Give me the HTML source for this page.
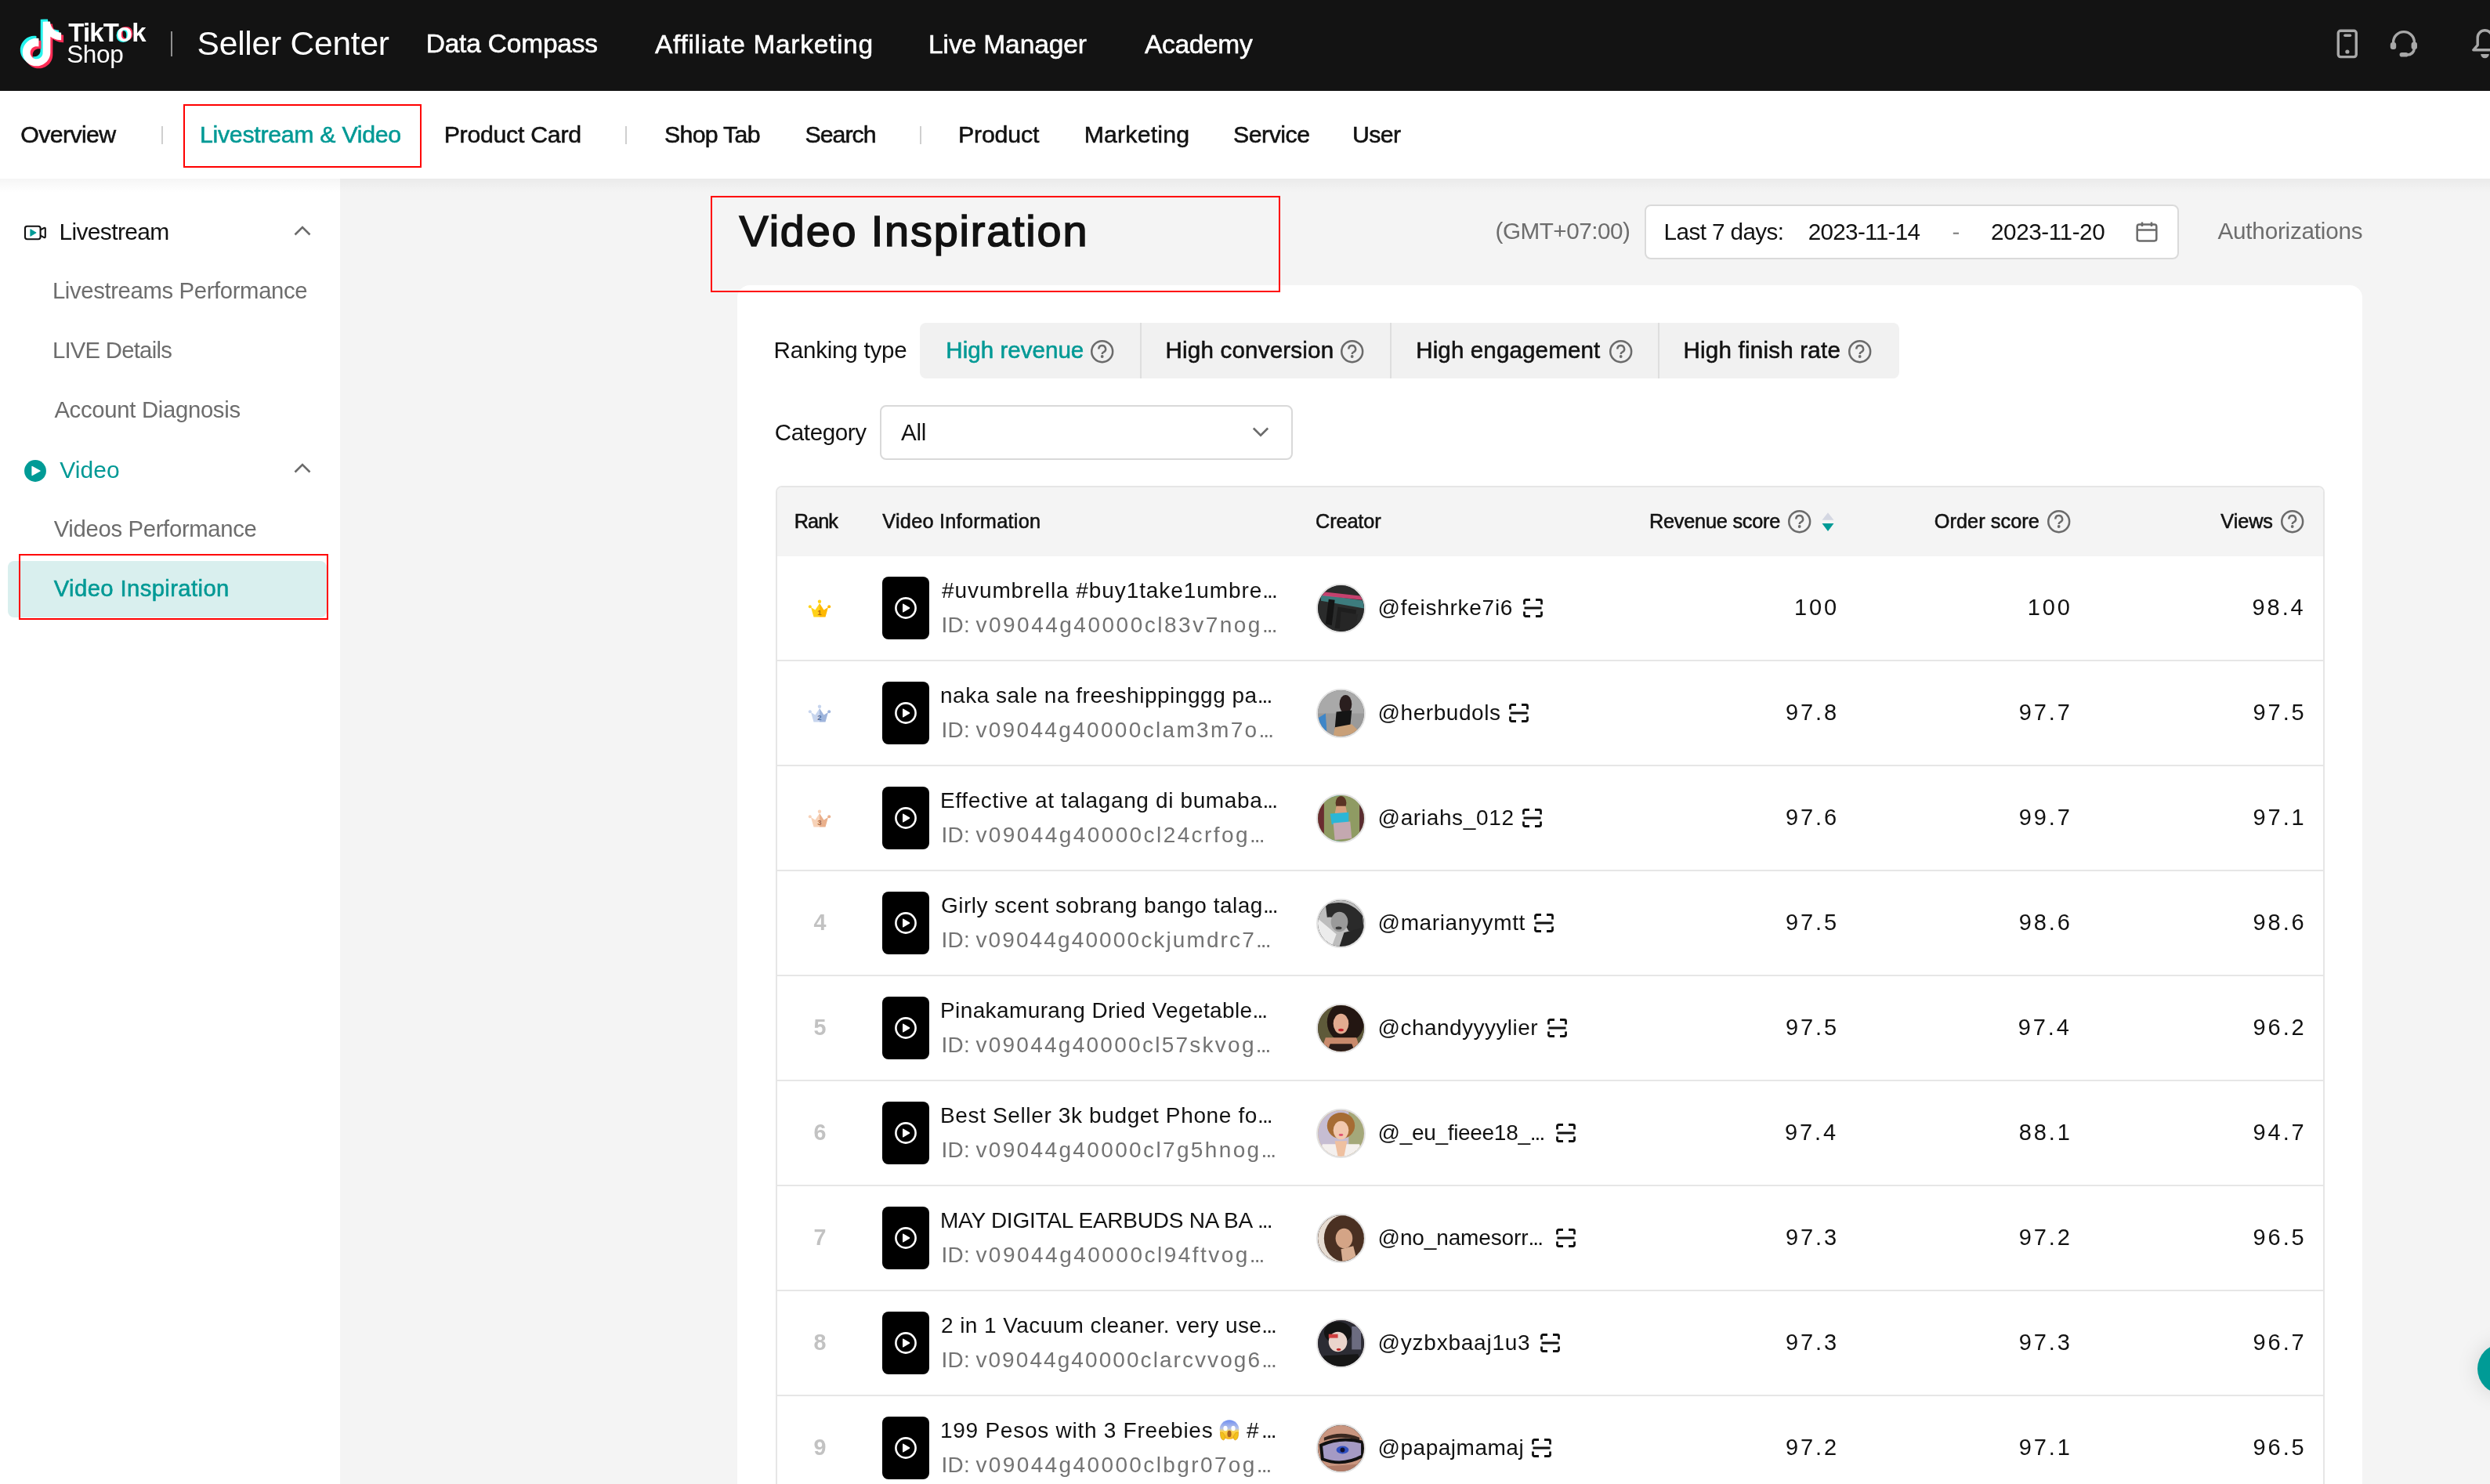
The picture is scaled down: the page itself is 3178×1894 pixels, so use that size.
<!DOCTYPE html>
<html><head><meta charset="utf-8"><title>Video Inspiration</title>
<style>
html,body{margin:0;padding:0}
body{width:3178px;height:1894px;overflow:hidden;position:relative;background:#f4f4f4;font-family:"Liberation Sans",sans-serif}
.ab{position:absolute;display:block}
.t{position:absolute;white-space:pre;font-family:"Liberation Sans",sans-serif}
#tx{position:absolute;left:0;top:0;width:3178px;height:1894px;will-change:transform}
.thumb{position:absolute;left:1126px;width:60px;height:80px;background:#000;border-radius:8px}
.thumb svg{display:block}
.av{position:absolute;left:1679.5px;width:63px;height:63px;border-radius:50%;box-sizing:border-box;border:2px solid #e2e2e2;overflow:hidden}
.av svg{margin:0}
.rbox{position:absolute;box-sizing:border-box;border:2px solid #ff0000}
.sep{position:absolute;width:2px;background:#cfcfcf}
</style></head><body>
<!-- ===== top bar ===== -->
<div class="ab" style="left:0;top:0;width:3178px;height:116px;background:#131313"></div>
<svg class="ab" style="left:0;top:0" width="100" height="100" viewBox="0 0 100 100">
 <defs><path id="tk" d="M12.525.02c1.31-.02 2.61-.01 3.91-.02.08 1.53.63 3.09 1.75 4.17 1.12 1.11 2.7 1.62 4.24 1.79v4.03c-1.44-.05-2.89-.35-4.2-.97-.57-.26-1.1-.59-1.62-.93-.01 2.92.01 5.84-.02 8.75-.08 1.4-.54 2.790-1.35 3.94-1.31 1.92-3.58 3.17-5.91 3.21-1.43.08-2.86-.31-4.08-1.03-2.02-1.19-3.44-3.37-3.65-5.71-.02-.5-.03-1-.01-1.49.18-1.9 1.12-3.72 2.58-4.96 1.66-1.44 3.98-2.13 6.15-1.72.02 1.48-.04 2.96-.04 4.44-.99-.32-2.15-.23-3.02.37-.63.41-1.11 1.04-1.36 1.75-.21.51-.15 1.07-.14 1.61.24 1.64 1.82 3.02 3.5 2.87 1.12-.01 2.19-.66 2.77-1.61.19-.33.4-.67.41-1.06.1-1.790.06-3.57.07-5.36.01-4.03-.01-8.05.02-12.07z"/></defs>
 <use href="#tk" fill="#25f4ee" transform="translate(22.1 24.6) scale(2.365)"/>
 <use href="#tk" fill="#fe2c55" transform="translate(28.1 30.6) scale(2.365)"/>
 <use href="#tk" fill="#ffffff" transform="translate(25.1 27.6) scale(2.365)"/>
</svg>
<div class="ab" style="left:218px;top:40px;width:2px;height:32px;background:#8f8f8f"></div>
<!-- right icons -->
<svg class="ab" style="left:2975px;top:30px" width="203" height="52" viewBox="2975 30 203 52">
 <g fill="none" stroke="#a8a8a8" stroke-width="3.4">
  <rect x="2984.3" y="39.2" width="23" height="33.4" rx="3"/>
  <path d="M3054.6 57 V54 A13.4 13.4 0 0 1 3081.4 54 V57" />
  <path d="M3081.5 61.5 C3081 66 3079 70 3072 70" stroke-linecap="round"/>
  <path d="M3156.8 63.8 L3162.2 57.6 V48 A9.3 9.3 0 0 1 3180.8 48 V57.6 L3186.2 63.8 Z" stroke-linejoin="round"/>
 </g>
 <g fill="#a8a8a8">
  <rect x="2991.2" y="43.5" width="10" height="3.4" rx="1.7"/>
  <circle cx="2995.9" cy="66" r="2.6"/>
  <rect x="3050.8" y="54" width="7.4" height="9" rx="3"/>
  <rect x="3077.6" y="53.8" width="7.4" height="9.2" rx="3"/>
  <rect x="3062.6" y="67" width="11" height="5.6" rx="2.8"/>
  <path d="M3166.2 69 H3176.8 A5.3 5.3 0 0 1 3166.2 69Z"/>
 </g>
</svg>
<!-- ===== subnav ===== -->
<div class="ab" style="left:0;top:116px;width:3178px;height:112px;background:#fff"></div>
<div class="sep" style="left:206px;top:161px;height:23px"></div>
<div class="sep" style="left:798px;top:161px;height:23px"></div>
<div class="sep" style="left:1174px;top:161px;height:23px"></div>
<div class="rbox" style="left:234px;top:133px;width:304px;height:81px"></div>
<!-- ===== sidebar ===== -->
<div class="ab" style="left:0;top:228px;width:434px;height:1666px;background:#fff"></div>
<div class="ab" style="left:0;top:228px;width:3178px;height:18px;background:linear-gradient(rgba(0,0,0,0.038),rgba(0,0,0,0))"></div>
<svg class="ab" style="left:25px;top:280px" width="40" height="32" viewBox="0 0 40 32">
 <rect x="7" y="8.7" width="19.6" height="16.5" rx="2.6" fill="none" stroke="#121212" stroke-width="2.1"/>
 <path d="M26.6 13.4 L31.3 10.9 Q32.8 10.2 32.8 11.9 V22.1 Q32.8 23.8 31.3 23.1 L26.6 20.6" fill="none" stroke="#121212" stroke-width="2.1" stroke-linejoin="round"/>
 <path d="M13.8 12.6 L21.2 17 L13.8 21.4Z" fill="#009b96" stroke="#009b96" stroke-width="0.8" stroke-linejoin="round"/>
</svg>
<svg class="ab" style="left:370px;top:283px" width="32" height="24" viewBox="0 0 32 24">
 <path d="M6.5 16.5 L16 7 L25.5 16.5" fill="none" stroke="#6b6b6b" stroke-width="2.6"/>
</svg>
<svg class="ab" style="left:25px;top:582px" width="40" height="40" viewBox="0 0 40 40">
 <circle cx="20" cy="19" r="13.95" fill="#009b96"/>
 <path d="M16.4 12.9 Q15.4 12.3 15.4 13.5 V24.5 Q15.4 25.7 16.4 25.1 L26.4 19.5 Q27.2 19 26.4 18.5Z" fill="#fff"/>
</svg>
<svg class="ab" style="left:370px;top:586px" width="32" height="24" viewBox="0 0 32 24">
 <path d="M6.5 16.5 L16 7 L25.5 16.5" fill="none" stroke="#6b6b6b" stroke-width="2.6"/>
</svg>
<div class="ab" style="left:10px;top:716px;width:407px;height:72px;border-radius:8px;background:#d9efee"></div>
<div class="rbox" style="left:24px;top:707px;width:395px;height:84px"></div>
<!-- ===== header area ===== -->
<div class="ab" style="left:2098.5px;top:260.5px;width:682.5px;height:70.5px;box-sizing:border-box;border:2px solid #dadada;border-radius:8px;background:#fff"></div>
<svg class="ab" style="left:2722px;top:280px" width="36" height="32" viewBox="0 0 36 32">
 <rect x="5.7" y="6.6" width="24.6" height="20.8" rx="2.6" fill="none" stroke="#6b6b6b" stroke-width="2.5"/>
 <path d="M5.7 13.6 H30.3 M12 3.4 V9 M24 3.4 V9" fill="none" stroke="#6b6b6b" stroke-width="2.5"/>
</svg>
<!-- ===== card ===== -->
<div class="ab" style="left:941px;top:364px;width:2074px;height:1600px;border-radius:16px;background:#fff"></div>
<div class="ab" style="left:1174px;top:412.2px;width:1249.5px;height:71.2px;border-radius:8px;background:#f1f1f1"></div>
<div class="ab" style="left:1454.6px;top:412.2px;width:2px;height:71.2px;background:#dedede"></div>
<div class="ab" style="left:1774px;top:412.2px;width:2px;height:71.2px;background:#dedede"></div>
<div class="ab" style="left:2116px;top:412.2px;width:2px;height:71.2px;background:#dedede"></div>
<svg class="ab" style="left:1392.4px;top:433.5px" width="30" height="30" viewBox="0 0 30 30"><circle cx="14.7" cy="14.7" r="13.45" fill="none" stroke="#6b6b6b" stroke-width="2.5"/><path d="M10.3 11.4 A4.4 4.4 0 1 1 16.6 15.4 C15.3 16 14.7 16.6 14.7 17.9" fill="none" stroke="#6b6b6b" stroke-width="2.5"/><circle cx="14.7" cy="21" r="1.9" fill="#6b6b6b"/></svg>
<svg class="ab" style="left:1711.4px;top:433.5px" width="30" height="30" viewBox="0 0 30 30"><circle cx="14.7" cy="14.7" r="13.45" fill="none" stroke="#6b6b6b" stroke-width="2.5"/><path d="M10.3 11.4 A4.4 4.4 0 1 1 16.6 15.4 C15.3 16 14.7 16.6 14.7 17.9" fill="none" stroke="#6b6b6b" stroke-width="2.5"/><circle cx="14.7" cy="21" r="1.9" fill="#6b6b6b"/></svg>
<svg class="ab" style="left:2053.6px;top:433.5px" width="30" height="30" viewBox="0 0 30 30"><circle cx="14.7" cy="14.7" r="13.45" fill="none" stroke="#6b6b6b" stroke-width="2.5"/><path d="M10.3 11.4 A4.4 4.4 0 1 1 16.6 15.4 C15.3 16 14.7 16.6 14.7 17.9" fill="none" stroke="#6b6b6b" stroke-width="2.5"/><circle cx="14.7" cy="21" r="1.9" fill="#6b6b6b"/></svg>
<svg class="ab" style="left:2359.4px;top:433.5px" width="30" height="30" viewBox="0 0 30 30"><circle cx="14.7" cy="14.7" r="13.45" fill="none" stroke="#6b6b6b" stroke-width="2.5"/><path d="M10.3 11.4 A4.4 4.4 0 1 1 16.6 15.4 C15.3 16 14.7 16.6 14.7 17.9" fill="none" stroke="#6b6b6b" stroke-width="2.5"/><circle cx="14.7" cy="21" r="1.9" fill="#6b6b6b"/></svg>
<div class="ab" style="left:1123.4px;top:516.8px;width:527px;height:70px;box-sizing:border-box;border:2px solid #d9d9d9;border-radius:8px;background:#fff"></div>
<svg class="ab" style="left:1594px;top:540px" width="30" height="24" viewBox="0 0 30 24">
 <path d="M5.8 6.5 L15 15.7 L24.2 6.5" fill="none" stroke="#6b6b6b" stroke-width="2.6"/>
</svg>
<!-- ===== table ===== -->
<div class="ab" style="left:989.5px;top:620.2px;width:1977px;height:1400px;box-sizing:border-box;border:2px solid #e6e6e6;border-radius:8px;background:#fff"></div>
<div class="ab" style="left:991.5px;top:622.2px;width:1973px;height:87.5px;border-radius:6px 6px 0 0;background:#f4f4f4"></div>
<svg class="ab" style="left:2322px;top:650px" width="24" height="32" viewBox="0 0 24 32">
 <path d="M3.5 13.8 L11 4.2 L18.5 13.8Z" fill="#d4d7e2"/>
 <path d="M3.5 18 L11 27.9 L18.5 18Z" fill="#009b96"/>
</svg>
<div class="ab" style="left:991px;top:842.0px;width:1975px;height:2px;background:#e6e6e6"></div>
<svg class="ab" style="left:1031px;top:764.5px" width="30" height="24" viewBox="0 0 30 24"><path d="M4 10 L9.5 13.5 L15 5 L15 22.5 L7.5 22.5 Z" fill="#ffd21a"/><path d="M26 10 L20.5 13.5 L15 5 L15 22.5 L22.5 22.5 Z" fill="#ffb800"/><circle cx="15" cy="2.8" r="2.2" fill="#ffd21a"/><circle cx="2.8" cy="9.3" r="2" fill="#ffd21a"/><circle cx="27.2" cy="9.3" r="2" fill="#ffb800"/><text x="15" y="19.8" text-anchor="middle" style="font-family:'Liberation Sans',sans-serif;font-weight:700;font-size:9.5px" fill="#b36b12">1</text></svg>
<div class="thumb" style="top:736.0px"><svg width="60" height="80" viewBox="0 0 60 80"><circle cx="30" cy="40" r="12.6" fill="none" stroke="#fff" stroke-width="2.6"/><path d="M26.8 34.6 L34.9 39.2 Q36 40 34.9 40.8 L26.8 45.4 Q26 45.8 26 44.9 L26 35.1 Q26 34.2 26.8 34.6Z" fill="#fff"/></svg></div>
<div class="av" style="top:744.5px;background:radial-gradient(circle at 60% 70%, #3a3a3a 0%, #262626 55%, #1b1b1b 100%)"><svg width="59" height="59" viewBox="0 0 60 60" style="display:block;border-radius:50%"><rect width="60" height="60" fill="#2a2b2b"/><path d="M4 12 L60 20 L60 30 L4 20Z" fill="#3d7c7e"/><path d="M2 8 L58 14 L58 19 L2 13Z" fill="#e0457a" opacity="0.85"/><path d="M14 18 L22 19 L18 52 L10 50Z" fill="#141414"/><path d="M26 28 L50 32 L46 58 L22 56Z" fill="#1e1e1e"/><path d="M30 34 L52 38 L48 60 L28 60Z" fill="#262626"/></svg></div>
<svg class="ab" style="left:1943.8px;top:764.3px" width="25" height="24" viewBox="0 0 25 24"><path d="M1.5 7.5V3.3a1.8 1.8 0 0 1 1.8-1.8H9M16 1.5h5.7a1.8 1.8 0 0 1 1.8 1.8v4.2M23.5 16.5v4.2a1.8 1.8 0 0 1-1.8 1.8H16M9 22.5H3.3a1.8 1.8 0 0 1-1.8-1.8v-4.2M1.5 12h22" fill="none" stroke="#121212" stroke-width="2.8"/></svg>
<div class="ab" style="left:991px;top:976.0px;width:1975px;height:2px;background:#e6e6e6"></div>
<svg class="ab" style="left:1031px;top:898.5px" width="30" height="24" viewBox="0 0 30 24"><path d="M4 10 L9.5 13.5 L15 5 L15 22.5 L7.5 22.5 Z" fill="#c7d5ee"/><path d="M26 10 L20.5 13.5 L15 5 L15 22.5 L22.5 22.5 Z" fill="#9fb5dc"/><circle cx="15" cy="2.8" r="2.2" fill="#c7d5ee"/><circle cx="2.8" cy="9.3" r="2" fill="#c7d5ee"/><circle cx="27.2" cy="9.3" r="2" fill="#9fb5dc"/><text x="15" y="19.8" text-anchor="middle" style="font-family:'Liberation Sans',sans-serif;font-weight:700;font-size:9.5px" fill="#55709e">2</text></svg>
<div class="thumb" style="top:870.0px"><svg width="60" height="80" viewBox="0 0 60 80"><circle cx="30" cy="40" r="12.6" fill="none" stroke="#fff" stroke-width="2.6"/><path d="M26.8 34.6 L34.9 39.2 Q36 40 34.9 40.8 L26.8 45.4 Q26 45.8 26 44.9 L26 35.1 Q26 34.2 26.8 34.6Z" fill="#fff"/></svg></div>
<div class="av" style="top:878.5px;background:radial-gradient(circle at 55% 45%, #2a2a2a 0%, #4a4a4a 35%, #8c8c8c 70%, #b0b0b0 100%)"><svg width="59" height="59" viewBox="0 0 60 60" style="display:block;border-radius:50%"><rect width="60" height="60" fill="#9a9a9a"/><rect x="0" y="0" width="60" height="30" fill="#b4b4b4" opacity="0.6"/><path d="M0 36 L10 30 L12 60 L0 60Z" fill="#3e86c8"/><ellipse cx="36" cy="18" rx="8" ry="12" fill="#2a1e1e"/><path d="M24 28 L44 26 L42 46 L22 50Z" fill="#151515"/><path d="M22 48 L44 44 L54 54 L30 60 L20 60Z" fill="#c9a078"/></svg></div>
<svg class="ab" style="left:1926.0px;top:898.3px" width="25" height="24" viewBox="0 0 25 24"><path d="M1.5 7.5V3.3a1.8 1.8 0 0 1 1.8-1.8H9M16 1.5h5.7a1.8 1.8 0 0 1 1.8 1.8v4.2M23.5 16.5v4.2a1.8 1.8 0 0 1-1.8 1.8H16M9 22.5H3.3a1.8 1.8 0 0 1-1.8-1.8v-4.2M1.5 12h22" fill="none" stroke="#121212" stroke-width="2.8"/></svg>
<div class="ab" style="left:991px;top:1110.0px;width:1975px;height:2px;background:#e6e6e6"></div>
<svg class="ab" style="left:1031px;top:1032.5px" width="30" height="24" viewBox="0 0 30 24"><path d="M4 10 L9.5 13.5 L15 5 L15 22.5 L7.5 22.5 Z" fill="#f7d2b8"/><path d="M26 10 L20.5 13.5 L15 5 L15 22.5 L22.5 22.5 Z" fill="#eab08c"/><circle cx="15" cy="2.8" r="2.2" fill="#f7d2b8"/><circle cx="2.8" cy="9.3" r="2" fill="#f7d2b8"/><circle cx="27.2" cy="9.3" r="2" fill="#eab08c"/><text x="15" y="19.8" text-anchor="middle" style="font-family:'Liberation Sans',sans-serif;font-weight:700;font-size:9.5px" fill="#a86a48">3</text></svg>
<div class="thumb" style="top:1004.0px"><svg width="60" height="80" viewBox="0 0 60 80"><circle cx="30" cy="40" r="12.6" fill="none" stroke="#fff" stroke-width="2.6"/><path d="M26.8 34.6 L34.9 39.2 Q36 40 34.9 40.8 L26.8 45.4 Q26 45.8 26 44.9 L26 35.1 Q26 34.2 26.8 34.6Z" fill="#fff"/></svg></div>
<div class="av" style="top:1012.5px;background:linear-gradient(90deg, #5a2a2a 0%, #8d9a63 18%, #27b5d0 45%, #c39a7a 60%, #8a9a63 85%, #5a2a2a 100%)"><svg width="59" height="59" viewBox="0 0 60 60" style="display:block;border-radius:50%"><rect width="60" height="60" fill="#8f9b63"/><rect x="0" y="0" width="8" height="60" fill="#6a2c30"/><rect x="54" y="0" width="6" height="60" fill="#5a2c30"/><ellipse cx="30" cy="10" rx="7" ry="9" fill="#5a3424"/><path d="M24 14 L36 14 L38 24 L22 24Z" fill="#d6a07e"/><path d="M16 24 L40 22 L40 36 L18 38Z" fill="#2bb6d6"/><path d="M20 36 L42 34 L44 56 L22 58Z" fill="#c4a8b0"/></svg></div>
<svg class="ab" style="left:1942.6px;top:1032.3px" width="25" height="24" viewBox="0 0 25 24"><path d="M1.5 7.5V3.3a1.8 1.8 0 0 1 1.8-1.8H9M16 1.5h5.7a1.8 1.8 0 0 1 1.8 1.8v4.2M23.5 16.5v4.2a1.8 1.8 0 0 1-1.8 1.8H16M9 22.5H3.3a1.8 1.8 0 0 1-1.8-1.8v-4.2M1.5 12h22" fill="none" stroke="#121212" stroke-width="2.8"/></svg>
<div class="ab" style="left:991px;top:1244.0px;width:1975px;height:2px;background:#e6e6e6"></div>
<div class="thumb" style="top:1138.0px"><svg width="60" height="80" viewBox="0 0 60 80"><circle cx="30" cy="40" r="12.6" fill="none" stroke="#fff" stroke-width="2.6"/><path d="M26.8 34.6 L34.9 39.2 Q36 40 34.9 40.8 L26.8 45.4 Q26 45.8 26 44.9 L26 35.1 Q26 34.2 26.8 34.6Z" fill="#fff"/></svg></div>
<div class="av" style="top:1146.5px;background:radial-gradient(circle at 45% 45%, #9a9a9a 0%, #555 45%, #2a2a2a 80%, #d8d8d8 100%)"><svg width="59" height="59" viewBox="0 0 60 60" style="display:block;border-radius:50%"><rect width="60" height="60" fill="#bdbdbd"/><path d="M0 24 L24 44 L18 60 L0 60Z" fill="#ececec"/><path d="M10 6 Q40 -4 58 20 L60 44 L40 40 Q30 20 12 22Z" fill="#2a2a2a"/><ellipse cx="28" cy="28" rx="11" ry="13" fill="#9a9a9a"/><ellipse cx="27" cy="36" rx="4" ry="2" fill="#3a3a3a"/><path d="M34 42 L56 36 L60 60 L28 60Z" fill="#262626"/></svg></div>
<svg class="ab" style="left:1957.7px;top:1166.3px" width="25" height="24" viewBox="0 0 25 24"><path d="M1.5 7.5V3.3a1.8 1.8 0 0 1 1.8-1.8H9M16 1.5h5.7a1.8 1.8 0 0 1 1.8 1.8v4.2M23.5 16.5v4.2a1.8 1.8 0 0 1-1.8 1.8H16M9 22.5H3.3a1.8 1.8 0 0 1-1.8-1.8v-4.2M1.5 12h22" fill="none" stroke="#121212" stroke-width="2.8"/></svg>
<div class="ab" style="left:991px;top:1378.0px;width:1975px;height:2px;background:#e6e6e6"></div>
<div class="thumb" style="top:1272.0px"><svg width="60" height="80" viewBox="0 0 60 80"><circle cx="30" cy="40" r="12.6" fill="none" stroke="#fff" stroke-width="2.6"/><path d="M26.8 34.6 L34.9 39.2 Q36 40 34.9 40.8 L26.8 45.4 Q26 45.8 26 44.9 L26 35.1 Q26 34.2 26.8 34.6Z" fill="#fff"/></svg></div>
<div class="av" style="top:1280.5px;background:radial-gradient(circle at 50% 40%, #e0a890 0%, #b06a50 30%, #3a2a20 65%, #1e1a16 100%)"><svg width="59" height="59" viewBox="0 0 60 60" style="display:block;border-radius:50%"><rect width="60" height="60" fill="#5e5a3a"/><ellipse cx="36" cy="22" rx="24" ry="26" fill="#231612"/><ellipse cx="30" cy="24" rx="10" ry="13" fill="#e2ab90"/><ellipse cx="30" cy="32" rx="3.5" ry="1.8" fill="#c0202a"/><path d="M10 42 L50 42 L56 60 L4 60Z" fill="#c98a6c"/><path d="M16 50 L44 50 L48 60 L12 60Z" fill="#2a1c18"/></svg></div>
<svg class="ab" style="left:1974.8px;top:1300.3px" width="25" height="24" viewBox="0 0 25 24"><path d="M1.5 7.5V3.3a1.8 1.8 0 0 1 1.8-1.8H9M16 1.5h5.7a1.8 1.8 0 0 1 1.8 1.8v4.2M23.5 16.5v4.2a1.8 1.8 0 0 1-1.8 1.8H16M9 22.5H3.3a1.8 1.8 0 0 1-1.8-1.8v-4.2M1.5 12h22" fill="none" stroke="#121212" stroke-width="2.8"/></svg>
<div class="ab" style="left:991px;top:1512.0px;width:1975px;height:2px;background:#e6e6e6"></div>
<div class="thumb" style="top:1406.0px"><svg width="60" height="80" viewBox="0 0 60 80"><circle cx="30" cy="40" r="12.6" fill="none" stroke="#fff" stroke-width="2.6"/><path d="M26.8 34.6 L34.9 39.2 Q36 40 34.9 40.8 L26.8 45.4 Q26 45.8 26 44.9 L26 35.1 Q26 34.2 26.8 34.6Z" fill="#fff"/></svg></div>
<div class="av" style="top:1414.5px;background:radial-gradient(circle at 50% 45%, #f0c8b0 0%, #e6b48e 35%, #d8b070 60%, #efe9dc 100%)"><svg width="59" height="59" viewBox="0 0 60 60" style="display:block;border-radius:50%"><rect width="60" height="60" fill="#c6bdd2"/><rect x="40" y="0" width="20" height="60" fill="#a4a87a"/><ellipse cx="30" cy="20" rx="18" ry="17" fill="#a66c34"/><ellipse cx="30" cy="26" rx="10" ry="12" fill="#f2c8ae"/><ellipse cx="30" cy="32" rx="3" ry="1.5" fill="#e05070"/><path d="M6 44 L54 44 L58 60 L2 60Z" fill="#f4f0ee"/><path d="M22 40 L38 40 L34 60 L26 60Z" fill="#efc0a0"/></svg></div>
<svg class="ab" style="left:1985.5px;top:1434.3px" width="25" height="24" viewBox="0 0 25 24"><path d="M1.5 7.5V3.3a1.8 1.8 0 0 1 1.8-1.8H9M16 1.5h5.7a1.8 1.8 0 0 1 1.8 1.8v4.2M23.5 16.5v4.2a1.8 1.8 0 0 1-1.8 1.8H16M9 22.5H3.3a1.8 1.8 0 0 1-1.8-1.8v-4.2M1.5 12h22" fill="none" stroke="#121212" stroke-width="2.8"/></svg>
<div class="ab" style="left:991px;top:1646.0px;width:1975px;height:2px;background:#e6e6e6"></div>
<div class="thumb" style="top:1540.0px"><svg width="60" height="80" viewBox="0 0 60 80"><circle cx="30" cy="40" r="12.6" fill="none" stroke="#fff" stroke-width="2.6"/><path d="M26.8 34.6 L34.9 39.2 Q36 40 34.9 40.8 L26.8 45.4 Q26 45.8 26 44.9 L26 35.1 Q26 34.2 26.8 34.6Z" fill="#fff"/></svg></div>
<div class="av" style="top:1548.5px;background:radial-gradient(circle at 50% 50%, #c08a70 0%, #7a4a36 40%, #3a2418 75%, #5e4030 100%)"><svg width="59" height="59" viewBox="0 0 60 60" style="display:block;border-radius:50%"><rect width="60" height="60" fill="#e6dcd2"/><ellipse cx="34" cy="30" rx="26" ry="30" fill="#4a3022"/><ellipse cx="34" cy="30" rx="11" ry="13" fill="#d4a486"/><path d="M30 44 L46 40 L50 56 L32 60Z" fill="#d8ae92"/></svg></div>
<svg class="ab" style="left:1985.5px;top:1568.3px" width="25" height="24" viewBox="0 0 25 24"><path d="M1.5 7.5V3.3a1.8 1.8 0 0 1 1.8-1.8H9M16 1.5h5.7a1.8 1.8 0 0 1 1.8 1.8v4.2M23.5 16.5v4.2a1.8 1.8 0 0 1-1.8 1.8H16M9 22.5H3.3a1.8 1.8 0 0 1-1.8-1.8v-4.2M1.5 12h22" fill="none" stroke="#121212" stroke-width="2.8"/></svg>
<div class="ab" style="left:991px;top:1780.0px;width:1975px;height:2px;background:#e6e6e6"></div>
<div class="thumb" style="top:1674.0px"><svg width="60" height="80" viewBox="0 0 60 80"><circle cx="30" cy="40" r="12.6" fill="none" stroke="#fff" stroke-width="2.6"/><path d="M26.8 34.6 L34.9 39.2 Q36 40 34.9 40.8 L26.8 45.4 Q26 45.8 26 44.9 L26 35.1 Q26 34.2 26.8 34.6Z" fill="#fff"/></svg></div>
<div class="av" style="top:1682.5px;background:radial-gradient(circle at 50% 45%, #e8c0b0 0%, #a03030 30%, #2a1a20 65%, #181820 100%)"><svg width="59" height="59" viewBox="0 0 60 60" style="display:block;border-radius:50%"><rect width="60" height="60" fill="#2c2c34"/><ellipse cx="26" cy="16" rx="18" ry="14" fill="#141414"/><ellipse cx="26" cy="28" rx="12" ry="13" fill="#ead4cc"/><rect x="14" y="18" width="12" height="5" fill="#d04040"/><ellipse cx="27" cy="38" rx="3" ry="1.6" fill="#c02828"/><path d="M8 46 L52 44 L58 60 L2 60Z" fill="#161616"/><rect x="44" y="8" width="12" height="30" fill="#6c6c80"/></svg></div>
<svg class="ab" style="left:1965.7px;top:1702.3px" width="25" height="24" viewBox="0 0 25 24"><path d="M1.5 7.5V3.3a1.8 1.8 0 0 1 1.8-1.8H9M16 1.5h5.7a1.8 1.8 0 0 1 1.8 1.8v4.2M23.5 16.5v4.2a1.8 1.8 0 0 1-1.8 1.8H16M9 22.5H3.3a1.8 1.8 0 0 1-1.8-1.8v-4.2M1.5 12h22" fill="none" stroke="#121212" stroke-width="2.8"/></svg>
<div class="ab" style="left:991px;top:1914.0px;width:1975px;height:2px;background:#e6e6e6"></div>
<div class="thumb" style="top:1808.0px"><svg width="60" height="80" viewBox="0 0 60 80"><circle cx="30" cy="40" r="12.6" fill="none" stroke="#fff" stroke-width="2.6"/><path d="M26.8 34.6 L34.9 39.2 Q36 40 34.9 40.8 L26.8 45.4 Q26 45.8 26 44.9 L26 35.1 Q26 34.2 26.8 34.6Z" fill="#fff"/></svg></div>
<div class="av" style="top:1816.5px;background:radial-gradient(circle at 50% 50%, #d8a890 0%, #b07868 40%, #1a1a1a 60%, #c89888 100%)"><svg width="59" height="59" viewBox="0 0 60 60" style="display:block;border-radius:50%"><rect width="60" height="60" fill="#c9957f"/><path d="M8 16 Q30 6 54 16 L54 20 Q30 12 8 20Z" fill="#3a2820"/><path d="M4 26 Q30 14 58 22 L58 40 Q32 54 6 44Z" fill="#a49ac4" stroke="#111" stroke-width="4"/><ellipse cx="32" cy="32" rx="8" ry="5" fill="#2f4fc0"/><ellipse cx="32" cy="32" rx="3" ry="3" fill="#101030"/><path d="M0 54 L60 50 L60 60 L0 60Z" fill="#b07a66"/></svg></div>
<svg class="ab" style="left:1954.5px;top:1836.3px" width="25" height="24" viewBox="0 0 25 24"><path d="M1.5 7.5V3.3a1.8 1.8 0 0 1 1.8-1.8H9M16 1.5h5.7a1.8 1.8 0 0 1 1.8 1.8v4.2M23.5 16.5v4.2a1.8 1.8 0 0 1-1.8 1.8H16M9 22.5H3.3a1.8 1.8 0 0 1-1.8-1.8v-4.2M1.5 12h22" fill="none" stroke="#121212" stroke-width="2.8"/></svg>
<svg class="ab" style="left:1555px;top:1810.5px" width="28" height="28" viewBox="0 0 28 28"><defs><linearGradient id="emg" x1="0" y1="0" x2="0" y2="1"><stop offset="0" stop-color="#6f8ef2"/><stop offset="0.45" stop-color="#b8c4e8"/><stop offset="0.6" stop-color="#ffd84a"/><stop offset="1" stop-color="#f5b21c"/></linearGradient></defs><circle cx="14" cy="13.5" r="12.3" fill="url(#emg)"/><ellipse cx="9" cy="12" rx="2.6" ry="3.3" fill="#fff"/><ellipse cx="19" cy="12" rx="2.6" ry="3.3" fill="#fff"/><ellipse cx="14" cy="19" rx="2.6" ry="4.2" fill="#a8621e"/><path d="M2.5 17 Q2 26 6.5 27 Q9 26.5 8.5 22 L6 17.5Z M25.5 17 Q26 26 21.5 27 Q19 26.5 19.5 22 L22 17.5Z" fill="#f2c21a" stroke="#d89214" stroke-width="0.6"/></svg>
<svg class="ab" style="left:2282.2px;top:651.1px" width="30" height="30" viewBox="0 0 30 30"><circle cx="14.7" cy="14.7" r="13.45" fill="none" stroke="#6b6b6b" stroke-width="2.5"/><path d="M10.3 11.4 A4.4 4.4 0 1 1 16.6 15.4 C15.3 16 14.7 16.6 14.7 17.9" fill="none" stroke="#6b6b6b" stroke-width="2.5"/><circle cx="14.7" cy="21" r="1.9" fill="#6b6b6b"/></svg>
<svg class="ab" style="left:2612.5px;top:651.1px" width="30" height="30" viewBox="0 0 30 30"><circle cx="14.7" cy="14.7" r="13.45" fill="none" stroke="#6b6b6b" stroke-width="2.5"/><path d="M10.3 11.4 A4.4 4.4 0 1 1 16.6 15.4 C15.3 16 14.7 16.6 14.7 17.9" fill="none" stroke="#6b6b6b" stroke-width="2.5"/><circle cx="14.7" cy="21" r="1.9" fill="#6b6b6b"/></svg>
<svg class="ab" style="left:2911.3px;top:651.1px" width="30" height="30" viewBox="0 0 30 30"><circle cx="14.7" cy="14.7" r="13.45" fill="none" stroke="#6b6b6b" stroke-width="2.5"/><path d="M10.3 11.4 A4.4 4.4 0 1 1 16.6 15.4 C15.3 16 14.7 16.6 14.7 17.9" fill="none" stroke="#6b6b6b" stroke-width="2.5"/><circle cx="14.7" cy="21" r="1.9" fill="#6b6b6b"/></svg>
<div class="rbox" style="left:907px;top:250px;width:727px;height:123px"></div>

<!-- floating button -->
<div class="ab" style="left:3162px;top:1714.5px;width:64px;height:64px;border-radius:50%;background:#009b96;box-shadow:0 0 28px rgba(0,0,0,0.13)"></div>
<div id="tx">
<div class="t" style="left:87.2px;top:25px;font-size:33px;line-height:33px;font-weight:700;color:#fff;letter-spacing:-0.8px;">TikT<span style="text-shadow:-1.6px 0.6px 0 #25f4ee,1.6px -0.6px 0 #fe2c55">o</span>k</div>
<div class="t" style="left:85.2px;top:54px;font-size:31.5px;line-height:31.5px;font-weight:400;color:#fff;letter-spacing:-0.333px;">Shop</div>
<div class="t" style="left:251.6px;top:35px;font-size:42.5px;line-height:42.5px;font-weight:400;color:#fff;letter-spacing:-0.217px;">Seller Center</div>
<div class="t" style="left:543.7px;top:39px;font-size:33.5px;line-height:33.5px;font-weight:400;-webkit-text-stroke:0.55px currentColor;color:#fff;letter-spacing:-0.2px;">Data Compass</div>
<div class="t" style="left:836.0px;top:40px;font-size:33.5px;line-height:33.5px;font-weight:400;-webkit-text-stroke:0.55px currentColor;color:#fff;letter-spacing:0.689px;">Affiliate Marketing</div>
<div class="t" style="left:1185.0px;top:40px;font-size:33.5px;line-height:33.5px;font-weight:400;-webkit-text-stroke:0.55px currentColor;color:#fff;letter-spacing:-0.091px;">Live Manager</div>
<div class="t" style="left:1461.0px;top:40px;font-size:33.5px;line-height:33.5px;font-weight:400;-webkit-text-stroke:0.55px currentColor;color:#fff;letter-spacing:-0.333px;">Academy</div>
<div class="t" style="left:26.3px;top:157px;font-size:30.3px;line-height:30.3px;font-weight:400;-webkit-text-stroke:0.55px currentColor;color:#121212;letter-spacing:-0.643px;">Overview</div>
<div class="t" style="left:255.0px;top:157px;font-size:30.3px;line-height:30.3px;font-weight:400;-webkit-text-stroke:0.55px currentColor;color:#009995;letter-spacing:-0.294px;">Livestream &amp; Video</div>
<div class="t" style="left:566.7px;top:157px;font-size:30.3px;line-height:30.3px;font-weight:400;-webkit-text-stroke:0.55px currentColor;color:#121212;letter-spacing:-0.282px;">Product Card</div>
<div class="t" style="left:848.0px;top:157px;font-size:30.3px;line-height:30.3px;font-weight:400;-webkit-text-stroke:0.55px currentColor;color:#121212;letter-spacing:-0.714px;">Shop Tab</div>
<div class="t" style="left:1027.5px;top:157px;font-size:30.3px;line-height:30.3px;font-weight:400;-webkit-text-stroke:0.55px currentColor;color:#121212;letter-spacing:-1.0px;">Search</div>
<div class="t" style="left:1222.9px;top:157px;font-size:30.3px;line-height:30.3px;font-weight:400;-webkit-text-stroke:0.55px currentColor;color:#121212;letter-spacing:-0.15px;">Product</div>
<div class="t" style="left:1383.7px;top:157px;font-size:30.3px;line-height:30.3px;font-weight:400;-webkit-text-stroke:0.55px currentColor;color:#121212;letter-spacing:0.163px;">Marketing</div>
<div class="t" style="left:1574.0px;top:157px;font-size:30.3px;line-height:30.3px;font-weight:400;-webkit-text-stroke:0.55px currentColor;color:#121212;letter-spacing:-0.5px;">Service</div>
<div class="t" style="left:1726.0px;top:157px;font-size:30.3px;line-height:30.3px;font-weight:400;-webkit-text-stroke:0.55px currentColor;color:#121212;letter-spacing:-0.667px;">User</div>
<div class="t" style="left:75.4px;top:281px;font-size:30px;line-height:30px;font-weight:400;color:#121212;letter-spacing:-0.644px;">Livestream</div>
<div class="t" style="left:66.9px;top:356px;font-size:29.3px;line-height:29.3px;font-weight:400;color:#6d6d6d;letter-spacing:-0.368px;">Livestreams Performance</div>
<div class="t" style="left:66.9px;top:432px;font-size:29.3px;line-height:29.3px;font-weight:400;color:#6d6d6d;letter-spacing:-0.755px;">LIVE Details</div>
<div class="t" style="left:69.4px;top:508px;font-size:29.3px;line-height:29.3px;font-weight:400;color:#6d6d6d;letter-spacing:-0.312px;">Account Diagnosis</div>
<div class="t" style="left:76.3px;top:585px;font-size:30px;line-height:30px;font-weight:400;color:#009995;letter-spacing:0.05px;">Video</div>
<div class="t" style="left:68.7px;top:660px;font-size:29.3px;line-height:29.3px;font-weight:400;color:#6d6d6d;letter-spacing:-0.335px;">Videos Performance</div>
<div class="t" style="left:68.7px;top:736px;font-size:29.3px;line-height:29.3px;font-weight:400;-webkit-text-stroke:0.55px currentColor;color:#009995;letter-spacing:0.375px;">Video Inspiration</div>
<div class="t" style="left:943.6px;top:267px;font-size:55.8px;line-height:55.8px;font-weight:400;-webkit-text-stroke:1.6px currentColor;color:#121212;letter-spacing:1.825px;">Video Inspiration</div>
<div class="t" style="left:1908.5px;top:280px;font-size:29.7px;line-height:29.7px;font-weight:400;color:#6d6d6d;letter-spacing:-0.5px;">(GMT+07:00)</div>
<div class="t" style="left:2123.6px;top:281px;font-size:29.7px;line-height:29.7px;font-weight:400;color:#121212;letter-spacing:-0.6px;">Last 7 days:</div>
<div class="t" style="left:2307.7px;top:281px;font-size:29.7px;line-height:29.7px;font-weight:400;color:#121212;letter-spacing:-0.7px;">2023-11-14</div>
<div class="t" style="left:2491.5px;top:281px;font-size:29.7px;line-height:29.7px;font-weight:400;color:#8a8a8a;">-</div>
<div class="t" style="left:2541.0px;top:281px;font-size:29.7px;line-height:29.7px;font-weight:400;color:#121212;letter-spacing:-0.444px;">2023-11-20</div>
<div class="t" style="left:2830.5px;top:280px;font-size:29.7px;line-height:29.7px;font-weight:400;color:#6d6d6d;letter-spacing:-0.231px;">Authorizations</div>
<div class="t" style="left:987.6px;top:432px;font-size:29.6px;line-height:29.6px;font-weight:400;color:#121212;letter-spacing:-0.236px;">Ranking type</div>
<div class="t" style="left:1207.3px;top:432px;font-size:29.6px;line-height:29.6px;font-weight:400;-webkit-text-stroke:0.55px currentColor;color:#009995;">High revenue</div>
<div class="t" style="left:1487.5px;top:432px;font-size:29.6px;line-height:29.6px;font-weight:400;-webkit-text-stroke:0.55px currentColor;color:#121212;letter-spacing:0.171px;">High conversion</div>
<div class="t" style="left:1807.2px;top:432px;font-size:29.6px;line-height:29.6px;font-weight:400;-webkit-text-stroke:0.55px currentColor;color:#121212;letter-spacing:0.1px;">High engagement</div>
<div class="t" style="left:2148.5px;top:432px;font-size:29.6px;line-height:29.6px;font-weight:400;-webkit-text-stroke:0.55px currentColor;color:#121212;letter-spacing:0.2px;">High finish rate</div>
<div class="t" style="left:988.8px;top:537px;font-size:29.6px;line-height:29.6px;font-weight:400;color:#121212;letter-spacing:-0.4px;">Category</div>
<div class="t" style="left:1150.0px;top:537px;font-size:29.6px;line-height:29.6px;font-weight:400;color:#121212;letter-spacing:-0.3px;">All</div>
<div class="t" style="left:1013.8px;top:653px;font-size:25.3px;line-height:25.3px;font-weight:400;-webkit-text-stroke:0.55px currentColor;color:#121212;letter-spacing:-1.0px;">Rank</div>
<div class="t" style="left:1126.3px;top:653px;font-size:25.3px;line-height:25.3px;font-weight:400;-webkit-text-stroke:0.55px currentColor;color:#121212;letter-spacing:0.244px;">Video Information</div>
<div class="t" style="left:1679.0px;top:653px;font-size:25.3px;line-height:25.3px;font-weight:400;-webkit-text-stroke:0.55px currentColor;color:#121212;letter-spacing:-0.117px;">Creator</div>
<div class="t" style="left:2104.9px;top:653px;font-size:25.3px;line-height:25.3px;font-weight:400;-webkit-text-stroke:0.55px currentColor;color:#121212;letter-spacing:-0.225px;">Revenue score</div>
<div class="t" style="left:2468.8px;top:653px;font-size:25.3px;line-height:25.3px;font-weight:400;-webkit-text-stroke:0.55px currentColor;color:#121212;letter-spacing:0.05px;">Order score</div>
<div class="t" style="left:2834.3px;top:653px;font-size:25.3px;line-height:25.3px;font-weight:400;-webkit-text-stroke:0.55px currentColor;color:#121212;letter-spacing:-0.075px;">Views</div>
<div class="t" style="left:1202.0px;top:740px;font-size:28px;line-height:28px;font-weight:400;color:#121212;letter-spacing:0.915px;">#uvumbrella #buy1take1umbre<span style="letter-spacing:-1.9px">...</span></div>
<div class="t" style="left:1201.5px;top:784px;font-size:28px;line-height:28px;font-weight:400;color:#737373;letter-spacing:0.25px;">ID:</div>
<div class="t" style="left:1245.4px;top:784px;font-size:28px;line-height:28px;font-weight:400;color:#737373;letter-spacing:2.505px;">v09044g40000cl83v7nog<span style="letter-spacing:-1.9px">...</span></div>
<div class="t" style="left:1758.6px;top:762px;font-size:28px;line-height:28px;font-weight:400;color:#121212;letter-spacing:0.727px;">@feishrke7i6</div>
<div class="t" style="left:2290.0px;top:761px;font-size:29px;line-height:29px;font-weight:400;color:#121212;letter-spacing:2.9px">100</div>
<div class="t" style="left:2587.8px;top:761px;font-size:29px;line-height:29px;font-weight:400;color:#121212;letter-spacing:2.9px">100</div>
<div class="t" style="left:2874.6px;top:761px;font-size:29px;line-height:29px;font-weight:400;color:#121212;letter-spacing:2.9px">98.4</div>
<div class="t" style="left:1200.0px;top:874px;font-size:28px;line-height:28px;font-weight:400;color:#121212;letter-spacing:0.517px;">naka sale na freeshippinggg pa<span style="letter-spacing:-1.9px">...</span></div>
<div class="t" style="left:1201.5px;top:918px;font-size:28px;line-height:28px;font-weight:400;color:#737373;letter-spacing:0.25px;">ID:</div>
<div class="t" style="left:1245.4px;top:918px;font-size:28px;line-height:28px;font-weight:400;color:#737373;letter-spacing:2.33px;">v09044g40000clam3m7o<span style="letter-spacing:-1.9px">...</span></div>
<div class="t" style="left:1758.6px;top:896px;font-size:28px;line-height:28px;font-weight:400;color:#121212;letter-spacing:0.544px;">@herbudols</div>
<div class="t" style="left:2279.0px;top:895px;font-size:29px;line-height:29px;font-weight:400;color:#121212;letter-spacing:2.9px">97.8</div>
<div class="t" style="left:2576.8px;top:895px;font-size:29px;line-height:29px;font-weight:400;color:#121212;letter-spacing:2.9px">97.7</div>
<div class="t" style="left:2875.6px;top:895px;font-size:29px;line-height:29px;font-weight:400;color:#121212;letter-spacing:2.9px">97.5</div>
<div class="t" style="left:1200.0px;top:1008px;font-size:28px;line-height:28px;font-weight:400;color:#121212;letter-spacing:0.635px;">Effective at talagang di bumaba<span style="letter-spacing:-1.9px">...</span></div>
<div class="t" style="left:1201.5px;top:1052px;font-size:28px;line-height:28px;font-weight:400;color:#737373;letter-spacing:0.25px;">ID:</div>
<div class="t" style="left:1245.4px;top:1052px;font-size:28px;line-height:28px;font-weight:400;color:#737373;letter-spacing:2.41px;">v09044g40000cl24crfog<span style="letter-spacing:-1.9px">...</span></div>
<div class="t" style="left:1758.6px;top:1030px;font-size:28px;line-height:28px;font-weight:400;color:#121212;letter-spacing:0.64px;">@ariahs_012</div>
<div class="t" style="left:2279.0px;top:1029px;font-size:29px;line-height:29px;font-weight:400;color:#121212;letter-spacing:2.9px">97.6</div>
<div class="t" style="left:2576.8px;top:1029px;font-size:29px;line-height:29px;font-weight:400;color:#121212;letter-spacing:2.9px">99.7</div>
<div class="t" style="left:2875.6px;top:1029px;font-size:29px;line-height:29px;font-weight:400;color:#121212;letter-spacing:2.9px">97.1</div>
<div class="t" style="left:1201.0px;top:1142px;font-size:28px;line-height:28px;font-weight:400;color:#121212;letter-spacing:0.503px;">Girly scent sobrang bango talag<span style="letter-spacing:-1.9px">...</span></div>
<div class="t" style="left:1201.5px;top:1186px;font-size:28px;line-height:28px;font-weight:400;color:#737373;letter-spacing:0.25px;">ID:</div>
<div class="t" style="left:1245.4px;top:1186px;font-size:28px;line-height:28px;font-weight:400;color:#737373;letter-spacing:2.124px;">v09044g40000ckjumdrc7<span style="letter-spacing:-1.9px">...</span></div>
<div class="t" style="left:1758.6px;top:1164px;font-size:28px;line-height:28px;font-weight:400;color:#121212;letter-spacing:0.627px;">@marianyymtt</div>
<div class="t" style="left:1038.6px;top:1163px;font-size:28.7px;line-height:28.7px;font-weight:700;color:#c2c2c2;">4</div>
<div class="t" style="left:2279.0px;top:1163px;font-size:29px;line-height:29px;font-weight:400;color:#121212;letter-spacing:2.9px">97.5</div>
<div class="t" style="left:2576.8px;top:1163px;font-size:29px;line-height:29px;font-weight:400;color:#121212;letter-spacing:2.9px">98.6</div>
<div class="t" style="left:2875.6px;top:1163px;font-size:29px;line-height:29px;font-weight:400;color:#121212;letter-spacing:2.9px">98.6</div>
<div class="t" style="left:1200.0px;top:1276px;font-size:28px;line-height:28px;font-weight:400;color:#121212;letter-spacing:0.393px;">Pinakamurang Dried Vegetable<span style="letter-spacing:-1.9px">...</span></div>
<div class="t" style="left:1201.5px;top:1320px;font-size:28px;line-height:28px;font-weight:400;color:#737373;letter-spacing:0.25px;">ID:</div>
<div class="t" style="left:1245.4px;top:1320px;font-size:28px;line-height:28px;font-weight:400;color:#737373;letter-spacing:2.267px;">v09044g40000cl57skvog<span style="letter-spacing:-1.9px">...</span></div>
<div class="t" style="left:1758.6px;top:1298px;font-size:28px;line-height:28px;font-weight:400;color:#121212;letter-spacing:0.454px;">@chandyyyylier</div>
<div class="t" style="left:1038.6px;top:1297px;font-size:28.7px;line-height:28.7px;font-weight:700;color:#c2c2c2;">5</div>
<div class="t" style="left:2279.0px;top:1297px;font-size:29px;line-height:29px;font-weight:400;color:#121212;letter-spacing:2.9px">97.5</div>
<div class="t" style="left:2575.8px;top:1297px;font-size:29px;line-height:29px;font-weight:400;color:#121212;letter-spacing:2.9px">97.4</div>
<div class="t" style="left:2875.6px;top:1297px;font-size:29px;line-height:29px;font-weight:400;color:#121212;letter-spacing:2.9px">96.2</div>
<div class="t" style="left:1200.0px;top:1410px;font-size:28px;line-height:28px;font-weight:400;color:#121212;letter-spacing:0.633px;">Best Seller 3k budget Phone fo<span style="letter-spacing:-1.9px">...</span></div>
<div class="t" style="left:1201.5px;top:1454px;font-size:28px;line-height:28px;font-weight:400;color:#737373;letter-spacing:0.25px;">ID:</div>
<div class="t" style="left:1245.4px;top:1454px;font-size:28px;line-height:28px;font-weight:400;color:#737373;letter-spacing:2.362px;">v09044g40000cl7g5hnog<span style="letter-spacing:-1.9px">...</span></div>
<div class="t" style="left:1758.6px;top:1432px;font-size:28px;line-height:28px;font-weight:400;color:#121212;letter-spacing:-0.315px;">@_eu_fieee18_<span style="letter-spacing:-1.9px">...</span></div>
<div class="t" style="left:1038.6px;top:1431px;font-size:28.7px;line-height:28.7px;font-weight:700;color:#c2c2c2;">6</div>
<div class="t" style="left:2278.0px;top:1431px;font-size:29px;line-height:29px;font-weight:400;color:#121212;letter-spacing:2.9px">97.4</div>
<div class="t" style="left:2576.8px;top:1431px;font-size:29px;line-height:29px;font-weight:400;color:#121212;letter-spacing:2.9px">88.1</div>
<div class="t" style="left:2875.6px;top:1431px;font-size:29px;line-height:29px;font-weight:400;color:#121212;letter-spacing:2.9px">94.7</div>
<div class="t" style="left:1200.0px;top:1544px;font-size:28px;line-height:28px;font-weight:400;color:#121212;letter-spacing:-0.246px;">MAY DIGITAL EARBUDS NA BA <span style="letter-spacing:-1.9px">...</span></div>
<div class="t" style="left:1201.5px;top:1588px;font-size:28px;line-height:28px;font-weight:400;color:#737373;letter-spacing:0.25px;">ID:</div>
<div class="t" style="left:1245.4px;top:1588px;font-size:28px;line-height:28px;font-weight:400;color:#737373;letter-spacing:2.481px;">v09044g40000cl94ftvog<span style="letter-spacing:-1.9px">...</span></div>
<div class="t" style="left:1758.6px;top:1566px;font-size:28px;line-height:28px;font-weight:400;color:#121212;letter-spacing:-0.133px;">@no_namesorr<span style="letter-spacing:-1.9px">...</span></div>
<div class="t" style="left:1038.6px;top:1565px;font-size:28.7px;line-height:28.7px;font-weight:700;color:#c2c2c2;">7</div>
<div class="t" style="left:2279.0px;top:1565px;font-size:29px;line-height:29px;font-weight:400;color:#121212;letter-spacing:2.9px">97.3</div>
<div class="t" style="left:2576.8px;top:1565px;font-size:29px;line-height:29px;font-weight:400;color:#121212;letter-spacing:2.9px">97.2</div>
<div class="t" style="left:2875.6px;top:1565px;font-size:29px;line-height:29px;font-weight:400;color:#121212;letter-spacing:2.9px">96.5</div>
<div class="t" style="left:1201.0px;top:1678px;font-size:28px;line-height:28px;font-weight:400;color:#121212;letter-spacing:0.419px;">2 in 1 Vacuum cleaner. very use<span style="letter-spacing:-1.9px">...</span></div>
<div class="t" style="left:1201.5px;top:1722px;font-size:28px;line-height:28px;font-weight:400;color:#737373;letter-spacing:0.25px;">ID:</div>
<div class="t" style="left:1245.4px;top:1722px;font-size:28px;line-height:28px;font-weight:400;color:#737373;letter-spacing:2.073px;">v09044g40000clarcvvog6<span style="letter-spacing:-1.9px">...</span></div>
<div class="t" style="left:1758.6px;top:1700px;font-size:28px;line-height:28px;font-weight:400;color:#121212;letter-spacing:0.764px;">@yzbxbaaj1u3</div>
<div class="t" style="left:1038.6px;top:1699px;font-size:28.7px;line-height:28.7px;font-weight:700;color:#c2c2c2;">8</div>
<div class="t" style="left:2279.0px;top:1699px;font-size:29px;line-height:29px;font-weight:400;color:#121212;letter-spacing:2.9px">97.3</div>
<div class="t" style="left:2576.8px;top:1699px;font-size:29px;line-height:29px;font-weight:400;color:#121212;letter-spacing:2.9px">97.3</div>
<div class="t" style="left:2875.6px;top:1699px;font-size:29px;line-height:29px;font-weight:400;color:#121212;letter-spacing:2.9px">96.7</div>
<div class="t" style="left:1200.0px;top:1812px;font-size:28px;line-height:28px;font-weight:400;color:#121212;letter-spacing:0.738px;">199 Pesos with 3 Freebies</div>
<div class="t" style="left:1591.0px;top:1812px;font-size:28px;line-height:28px;font-weight:400;color:#121212;letter-spacing:3.5px;">#<span style="letter-spacing:-1.9px">...</span></div>
<div class="t" style="left:1201.5px;top:1856px;font-size:28px;line-height:28px;font-weight:400;color:#737373;letter-spacing:0.25px;">ID:</div>
<div class="t" style="left:1245.4px;top:1856px;font-size:28px;line-height:28px;font-weight:400;color:#737373;letter-spacing:2.386px;">v09044g40000clbgr07og<span style="letter-spacing:-1.9px">...</span></div>
<div class="t" style="left:1758.6px;top:1834px;font-size:28px;line-height:28px;font-weight:400;color:#121212;letter-spacing:0.51px;">@papajmamaj</div>
<div class="t" style="left:1038.6px;top:1833px;font-size:28.7px;line-height:28.7px;font-weight:700;color:#c2c2c2;">9</div>
<div class="t" style="left:2279.0px;top:1833px;font-size:29px;line-height:29px;font-weight:400;color:#121212;letter-spacing:2.9px">97.2</div>
<div class="t" style="left:2576.8px;top:1833px;font-size:29px;line-height:29px;font-weight:400;color:#121212;letter-spacing:2.9px">97.1</div>
<div class="t" style="left:2875.6px;top:1833px;font-size:29px;line-height:29px;font-weight:400;color:#121212;letter-spacing:2.9px">96.5</div>
</div>
</body></html>
